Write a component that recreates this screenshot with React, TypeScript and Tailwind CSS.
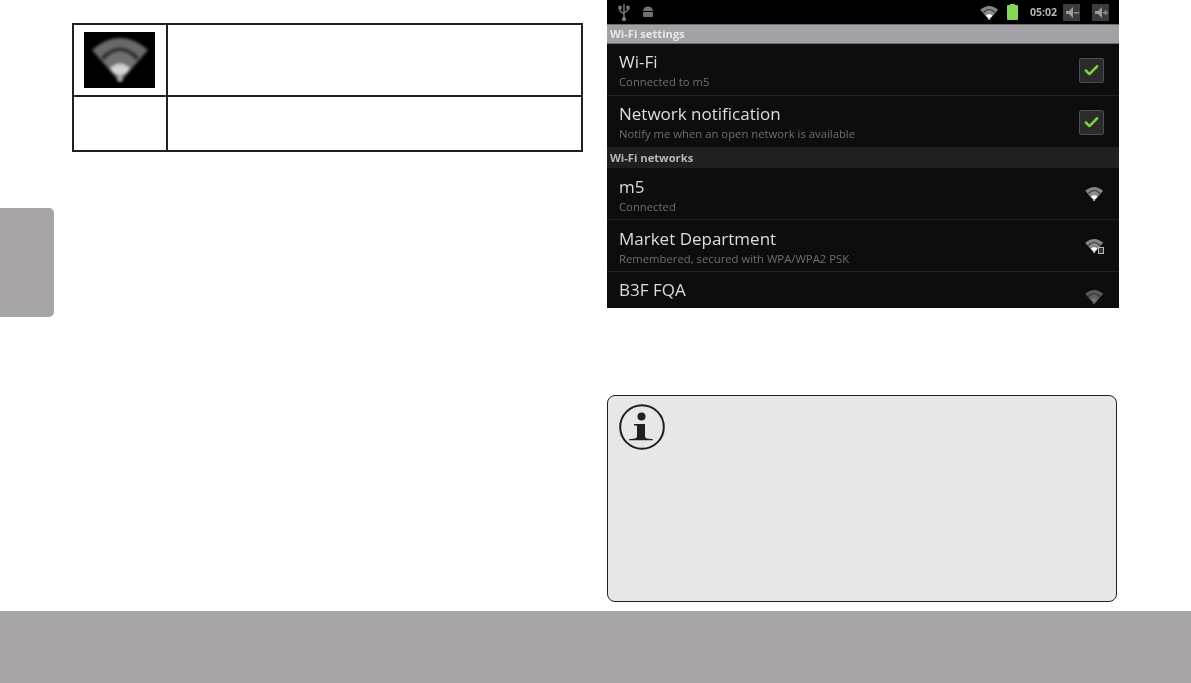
import React from 'react';
import { Check } from 'lucide-react';

const FONT = 'font-["Open_Sans","Noto_Sans",sans-serif]';

function WifiFan({ className, dim = false }: { className?: string; dim?: boolean }) {
  return (
    <svg viewBox="0 0 71 56" className={className}>
      <path d="M8 18 Q36 -6 64 18 L36 50 Z" fill={dim ? '#5c5c5c' : '#6a6a6a'} />
      <path d="M17 25 Q36 6 55 25 L36 50 Z" fill="#2e2e2e" />
      <path d="M19 29 Q36 9 53 29 L36 50 Z" fill={dim ? '#5c5c5c' : '#707070'} />
      <path d="M26 36 Q36 27 46 36 Q44 42 36 44 Q28 42 26 36 Z" fill={dim ? '#777777' : '#d2d2d2'} />
      <circle cx="36" cy="47" r="3" fill={dim ? '#666666' : '#a8a8a8'} />
    </svg>
  );
}

function Checkbox() {
  return (
    <div className="mr-[2px] mt-[1px] flex h-[25px] w-[25px] items-center justify-center rounded-[2px] border border-[#4c4c4c] bg-[#2b2b2b]">
      <Check className="h-[17px] w-[17px] text-[#7ed13f] blur-[0.4px]" strokeWidth={3.5} />
    </div>
  );
}

function Row({
  title,
  sub,
  right,
  cut = false,
  low = false,
}: {
  title: string;
  sub?: string;
  right: React.ReactNode;
  cut?: boolean;
  low?: boolean;
}) {
  return (
    <div className={`flex justify-between pl-3 pr-[13px] ${cut ? 'h-[36px] pt-[7px]' : 'h-[52px] items-center border-b border-[#222222]'}`}>
      <div className={`blur-[0.5px] ${low ? 'pt-[2px]' : ''}`}>
        <div className="text-[17px] leading-[22px] text-[#dddddd]">{title}</div>
        {sub && <div className="mt-[2px] text-[11.3px] leading-[14px] text-[#6f6f6f]">{sub}</div>}
      </div>
      {right}
    </div>
  );
}

function SectionBar({ label, light = false }: { label: string; light?: boolean }) {
  return (
    <div
      className={
        light
          ? 'flex h-[20px] items-center border-y border-[#6b6b70] bg-[#a1a2a6] pl-[3px]'
          : 'flex h-[20px] items-center bg-[#202020] pl-[3px]'
      }
    >
      <span className={`text-[11.2px] font-bold blur-[0.5px] ${light ? 'text-[#e6e6e6]' : 'text-[#b8b8b8]'}`}>{label}</span>
    </div>
  );
}

function VolumeIcon({ plus = false }: { plus?: boolean }) {
  return (
    <div className="flex h-[17px] w-[17px] items-center justify-center bg-[#3a3d3c] blur-[0.6px]">
      <svg viewBox="0 0 17 17" className="h-[17px] w-[17px]">
        <path d="M3 7h3l4-4v11l-4-4H3z" fill="#9a9d9c" />
        <rect x="11" y="8" width="5" height="1.5" fill="#8a8d8c" />
        {plus && <rect x="12.8" y="6" width="1.5" height="5" fill="#8a8d8c" />}
      </svg>
    </div>
  );
}

function PhoneScreen() {
  return (
    <div className="flex h-[308px] w-[512px] flex-col overflow-hidden bg-[#0d0d0d]">
      {/* status bar */}
      <div className="flex h-[24px] shrink-0 items-center justify-between bg-black pl-[11px] pr-[10px]">
        <div className="flex items-center gap-[11px] blur-[0.5px]">
          <svg viewBox="0 0 12 18" className="h-[18px] w-[12px]" fill="none" stroke="#7a7a7a" strokeWidth="1.4">
            <path d="M6 1v16M2 5v3l4 3M10 5v2l-4 3" />
            <circle cx="6" cy="16" r="1.5" fill="#7a7a7a" />
            <rect x="1" y="3.5" width="2" height="2" fill="#7a7a7a" />
            <rect x="9" y="3.5" width="2" height="2" fill="#7a7a7a" />
          </svg>
          <svg viewBox="0 0 14 14" className="h-[14px] w-[14px]">
            <path d="M2 6a5 4.5 0 0 1 10 0z" fill="#707070" />
            <rect x="2" y="7" width="10" height="5" rx="1" fill="#707070" />
          </svg>
        </div>
        <div className="flex items-center pt-[1px]">
          <WifiFan className="h-[18px] w-[24px] brightness-125 blur-[0.4px]" />
          <div className="relative ml-[6px] h-[15px] w-[11px] rounded-[1px] bg-[#86d45c] blur-[0.4px]">
            <div className="absolute -top-[1px] left-[3px] h-[1px] w-[5px] bg-[#86d45c]" />
          </div>
          <span className="ml-[12px] text-[10.5px] font-bold text-[#b4b4b4] blur-[0.3px]">05:02</span>
          <div className="ml-[6px]"><VolumeIcon /></div>
          <div className="ml-[12px]"><VolumeIcon plus /></div>
        </div>
      </div>

      <SectionBar label="Wi-Fi settings" light />
      <Row title="Wi-Fi" sub="Connected to m5" right={<Checkbox />} />
      <Row title="Network notification" sub="Notify me when an open network is available" right={<Checkbox />} />
      <SectionBar label="Wi-Fi networks" />
      <Row low title="m5" sub="Connected" right={<WifiFan className="h-[18px] w-[24px] brightness-125 blur-[0.4px]" />} />
      <Row
        low
        title="Market Department"
        sub="Remembered, secured with WPA/WPA2 PSK"
        right={
          <div className="relative">
            <WifiFan className="h-[18px] w-[24px] brightness-125 blur-[0.4px]" />
            <div className="absolute bottom-[1px] right-[2px] h-[7px] w-[6px] border border-[#bbbbbb] bg-[#333333] blur-[0.3px]" />
          </div>
        }
      />
      <Row title="B3F FQA" right={<WifiFan dim className="mt-[9px] h-[18px] w-[24px] blur-[0.4px]" />} cut />
    </div>
  );
}

function InfoIcon() {
  return (
    <svg viewBox="0 0 46 46" className="h-[46px] w-[46px]">
      <circle cx="23" cy="23" r="21.8" fill="none" stroke="#231f20" strokeWidth="2" />
      <circle cx="22.5" cy="12.5" r="4" fill="#231f20" />
      <path d="M15 20h11v12q0 2 2 2.5l6 .8v1H10v-1l6-.8q2-.5 2-2.5v-9.5q0-1-1-1h-2z" fill="#231f20" />
    </svg>
  );
}

export default function App() {
  return (
    <div className={`flex h-[683px] w-[1191px] flex-col overflow-hidden bg-white ${FONT}`}>
      <div className="flex h-[611px] shrink-0">
        {/* side tab */}
        <div className="w-[54px] shrink-0 pt-[208px]">
          <div className="h-[109px] rounded-r-[5px] bg-[#a7a5a5]" />
        </div>

        {/* left column */}
        <div className="ml-[18px] w-[511px] shrink-0 pt-[23px]">
          <div className="grid h-[129px] grid-cols-[94px_1fr] grid-rows-[72px_1fr] border-2 border-[#231f20]">
            <div className="flex items-center justify-center border-r-2 border-b-2 border-[#231f20] pr-[1px]">
              <div className="h-[56px] w-[71px] bg-black">
                <WifiFan className="h-[56px] w-[71px] blur-[1.5px]" />
              </div>
            </div>
            <div className="border-b-2 border-[#231f20]" />
            <div className="border-r-2 border-[#231f20]" />
            <div />
          </div>
        </div>

        {/* right column */}
        <div className="ml-[24px] flex w-[512px] shrink-0 flex-col">
          <PhoneScreen />
          <div className="mt-[87px] h-[207px] w-[510px] rounded-[8px] border-[1.5px] border-[#231f20] bg-[#e7e7e7] pl-[11px] pt-[8px]">
            <InfoIcon />
          </div>
        </div>
      </div>

      <div className="flex-1 bg-[#a7a5a5]" />
    </div>
  );
}
